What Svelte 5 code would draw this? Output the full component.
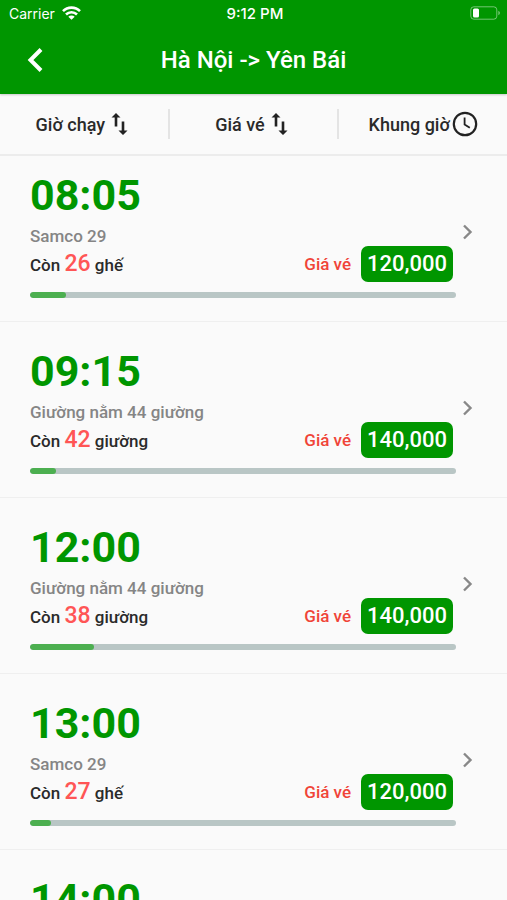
<script lang="ts">
  interface Trip {
    time: string;
    bus: string;
    left: number;
    unit: string;
    price: string;
    sold: number;
  }

  const trips: Trip[] = [
    { time: '08:05', bus: 'Samco 29', left: 26, unit: 'ghế', price: '120,000', sold: 8.5 },
    { time: '09:15', bus: 'Giường nằm 44 giường', left: 42, unit: 'giường', price: '140,000', sold: 6 },
    { time: '12:00', bus: 'Giường nằm 44 giường', left: 38, unit: 'giường', price: '140,000', sold: 15 },
    { time: '13:00', bus: 'Samco 29', left: 27, unit: 'ghế', price: '120,000', sold: 5 },
    { time: '14:00', bus: 'Samco 29', left: 29, unit: 'ghế', price: '120,000', sold: 3 },
  ];
</script>

{#snippet sortIcon()}
  <svg class="sort" width="18" height="24" viewBox="0 0 18 24" aria-hidden="true">
    <path d="M5 1 9.500 5.500H6.300V14.500H3.700V5.500H.5ZM12 23 7.500 18.500H10.700V9.500H13.300V18.500H16.500Z" />
  </svg>
{/snippet}

<div class="screen">
  <header class="top">
    <div class="status">
      <div class="carrier">
        <span>Carrier</span>
        <svg width="19" height="14" viewBox="0 0 19 14" fill="none" stroke="#fff" stroke-width="2.600" aria-hidden="true">
          <path d="M1 5.200A12 12 0 0 1 18 5.200" />
          <path d="M4 8.500A7.800 7.800 0 0 1 15 8.500" />
          <path d="M9.500 13.800 6.300 10.700A4.600 4.600 0 0 1 12.700 10.700Z" fill="#fff" stroke="none" />
        </svg>
      </div>
      <span class="clock">9:12 PM</span>
      <div class="battery">
        <svg width="31" height="14" viewBox="0 0 31 14" aria-hidden="true">
          <rect x=".8" y=".8" width="26" height="12.400" rx="3" fill="none" stroke="#fff" stroke-opacity=".45" />
          <rect x="3" y="2.500" width="6" height="9" rx="1.500" fill="#fff" />
          <path d="M28.300 4.800Q30 5.500 30 7T28.300 9.200Z" fill="#fff" fill-opacity=".45" />
        </svg>
      </div>
    </div>
    <nav class="bar">
      <button class="back" aria-label="Quay lại">
        <svg width="18" height="26" viewBox="0 0 18 26" fill="none" stroke="#fff" stroke-width="4" aria-hidden="true">
          <path d="M15 2.500 4.500 13 15 23.500" />
        </svg>
      </button>
      <h1>Hà Nội -&gt; Yên Bái</h1>
    </nav>
  </header>

  <div class="filters">
    <button class="filter">Giờ chạy {@render sortIcon()}</button>
    <button class="filter">Giá vé {@render sortIcon()}</button>
    <button class="filter">
      Khung giờ
      <svg width="26" height="26" viewBox="0 0 26 26" fill="none" stroke="#222" stroke-width="2.200" aria-hidden="true">
        <circle cx="13" cy="13" r="11.200" />
        <path d="M12.600 6.500V13.500L17.800 16.800" stroke-width="1.800" />
      </svg>
    </button>
  </div>

  <ul class="trips">
    {#each trips as trip (trip.time)}
      <li>
        <a class="trip" href="#{trip.time}">
          <div class="info">
            <div class="time">{trip.time}</div>
            <div class="bus">{trip.bus}</div>
            <div class="line">
              <span class="seats">Còn <b>{trip.left}</b> {trip.unit}</span>
              <span class="label">Giá vé</span>
              <span class="price">{trip.price}</span>
            </div>
            <div class="track">
              <div class="fill" style="width: {trip.sold}%"></div>
            </div>
          </div>
          <svg class="chevron" width="12" height="16" viewBox="0 0 12 16" fill="none" stroke="#888" stroke-width="2.400" aria-hidden="true">
            <path d="M2 1.500 8.500 8 2 14.500" />
          </svg>
        </a>
      </li>
    {/each}
  </ul>
</div>

<style>
  :global(body) {
    margin: 0;
    background: #fafafa;
  }
  .screen {
    height: 100vh;
    overflow: hidden;
    display: flex;
    flex-direction: column;
    font-family: Roboto, 'Noto Sans', sans-serif;
    font-weight: 500;
    color: #2a2a2a;
  }
  button {
    border: 0;
    padding: 0;
    background: none;
    font: inherit;
    color: inherit;
  }
  svg {
    display: block;
    flex-shrink: 0;
  }
  .top {
    flex-shrink: 0;
    background: #009600;
    color: #fff;
    box-shadow: 0 1px 2px rgba(0, 0, 0, 0.2);
  }
  .status {
    display: grid;
    grid-template-columns: 1fr auto 1fr;
    align-items: center;
    height: 26px;
    padding: 0 6px 0 9px;
    font-family: Inter, sans-serif;
    font-size: 14px;
  }
  .carrier {
    display: flex;
    align-items: center;
    gap: 7px;
    font-weight: 400;
  }
  .clock {
    font-size: 15px;
    font-weight: 500;
  }
  .battery {
    display: flex;
    justify-content: flex-end;
  }
  .bar {
    display: grid;
    grid-template-columns: 70px 1fr 70px;
    align-items: center;
    height: 68px;
  }
  .back {
    display: flex;
    justify-content: center;
  }
  h1 {
    margin: 0;
    font-size: 24px;
    font-weight: 500;
    text-align: center;
  }
  .filters {
    flex-shrink: 0;
    display: flex;
    align-items: center;
    height: 62px;
    border-bottom: 2px solid #ececec;
    box-sizing: border-box;
  }
  .filter {
    flex: 1;
    display: flex;
    align-items: center;
    justify-content: center;
    gap: 2px;
    height: 30px;
    font-size: 18px;
  }
  .filter + .filter {
    border-left: 2px solid #e4e4e4;
  }
  .sort {
    margin: 0 3px 0 4px;
    fill: #222;
  }
  .trips {
    margin: 0;
    padding: 0;
    list-style: none;
  }
  .trip {
    display: flex;
    align-items: center;
    gap: 6px;
    padding: 23px 33px 23px 30px;
    border-bottom: 1px solid #efefef;
    color: inherit;
    text-decoration: none;
  }
  li:first-child .trip {
    padding-top: 13px;
  }
  .info {
    flex: 1;
  }
  .time {
    font-size: 43px;
    line-height: 52px;
    font-weight: 700;
    color: #009600;
  }
  .bus {
    margin-top: 5px;
    font-size: 17px;
    line-height: 20px;
    color: #858585;
  }
  .line {
    display: flex;
    align-items: center;
    height: 36px;
    padding-right: 3px;
    font-size: 17px;
  }
  .seats {
    flex: 1;
  }
  .seats b {
    font-size: 23px;
    font-weight: 500;
    line-height: 24px;
    color: #ff5555;
  }
  .label {
    color: #f04438;
  }
  .price {
    margin-left: 10px;
    padding: 0 6px;
    border-radius: 7px;
    background: #009600;
    font-size: 22px;
    line-height: 36px;
    color: #fff;
  }
  .track {
    height: 6px;
    margin-top: 10px;
    border-radius: 3px;
    background: #b9c6c5;
    overflow: hidden;
  }
  .fill {
    height: 100%;
    border-radius: 3px;
    background: #4caf50;
  }
  .chevron {
    margin-bottom: 4px;
  }
</style>
